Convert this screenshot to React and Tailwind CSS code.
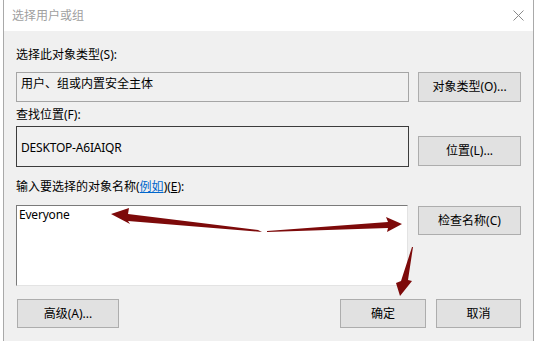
import React from "react";

const font = { fontFamily: '"Noto Sans", "Noto Sans CJK SC", sans-serif' };

function WinButton({ children, className = "" }) {
  return (
    <div
      className={`flex items-center justify-center bg-[#e1e1e1] border border-[#adadad] text-[12px] text-black ${className}`}
    >
      {children}
    </div>
  );
}

export default function App() {
  return (
    <div className="relative w-[537px] h-[341px] bg-white overflow-hidden" style={font}>
      <div className="ml-[3px] w-[531px] h-[341px] flex flex-col border-l border-r border-[#a9a9a9]">
        {/* title bar */}
        <div className="h-[31px] bg-white flex items-center justify-between pl-[8px] pr-[9px] shrink-0">
          <span className="text-[12px] text-[#a0a0a0] leading-none">选择用户或组</span>
          <svg width="11" height="11" viewBox="0 0 11 11">
            <path d="M0.5 0.5 L10.5 10.5 M10.5 0.5 L0.5 10.5" stroke="#8a8a8a" strokeWidth="1" />
          </svg>
        </div>

        {/* body */}
        <div className="flex-1 bg-[#f0f0f0] pl-[12px] pt-[16px] text-[12px] text-black">
          <div className="h-[16px] leading-[16px]">选择此对象类型(S):</div>

          <div className="mt-[9px] flex gap-[9px]">
            <div className="w-[393px] h-[30px] border border-[#a5a5a5] bg-[#f0f0f0] pl-[4px] pt-[3px] leading-[16px]">
              用户、组或内置安全主体
            </div>
            <WinButton className="w-[103px] h-[30px]">对象类型(O)...</WinButton>
          </div>

          <div className="mt-[5px] h-[16px] leading-[16px]">查找位置(F):</div>

          <div className="mt-[3px] flex gap-[9px]">
            <div className="w-[393px] h-[41px] border border-[#3c3c3c] bg-[#f0f0f0] pl-[4px] pt-[13px] leading-[16px] tracking-[-0.2px]">
              DESKTOP-A6IAIQR
            </div>
            <WinButton className="mt-[10px] w-[103px] h-[30px]">位置(L)...</WinButton>
          </div>

          <div className="mt-[12px] h-[16px] leading-[16px]">
            输入要选择的对象名称(
            <span className="text-[#0066cc] underline">例如</span>)(<span className="underline">E</span>):
          </div>

          <div className="mt-[10px] flex gap-[10px]">
            <div className="w-[392px] h-[81px] bg-white border border-t-[#7a7a7a] border-l-[#7a7a7a] border-r-[#e3e3e3] border-b-[#e3e3e3] pl-[2px] pt-[1px] leading-[16px] tracking-[-0.2px]">
              Everyone
            </div>
            <WinButton className="mt-[1px] w-[103px] h-[29px]">检查名称(C)</WinButton>
          </div>

          <div className="mt-[13px] flex">
            <WinButton className="ml-[1px] w-[102px] h-[29px]">高级(A)...</WinButton>
            <WinButton className="ml-[221px] w-[86px] h-[29px]">确定</WinButton>
            <WinButton className="ml-[10px] w-[85px] h-[29px]">取消</WinButton>
          </div>
        </div>
      </div>

      {/* annotation arrows */}
      <svg
        className="absolute left-0 top-0 pointer-events-none"
        width="537"
        height="341"
        viewBox="0 0 537 341"
      >
        <polygon
          points="111,214 129,208 128,214 258,230 262,232 128,221 130,224"
          fill="#7d0a0a"
        />
        <polygon
          points="267,231 388,222 386,217 402,224 387,232 388,228 267,232"
          fill="#7d0a0a"
        />
        <polygon
          points="413,247 408,280 412,281 400,296 396,283 401,281 412,247"
          fill="#7d0a0a"
        />
      </svg>
    </div>
  );
}
